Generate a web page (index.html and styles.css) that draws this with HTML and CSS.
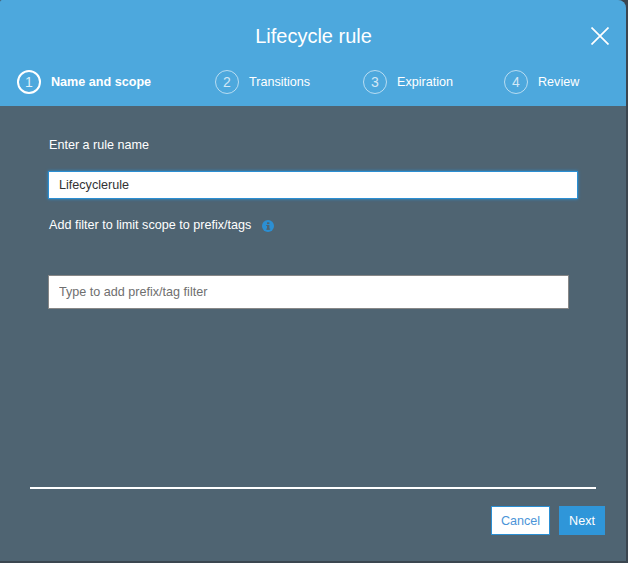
FILE: index.html
```html
<!DOCTYPE html>
<html lang="en">
<head>
<meta charset="utf-8">
<title>Lifecycle rule</title>
<link rel="stylesheet" href="styles.css">
</head>
<body>
<div class="dialog">
  <header class="header">
    <div class="title-row">
      <h1 class="title">Lifecycle rule</h1>
      <button class="close" aria-label="Close">
        <svg width="18" height="18" viewBox="0 0 18 18"><path d="M0.5 0.5L17.5 17.5M17.5 0.5L0.5 17.5" class="close-x"/></svg>
      </button>
    </div>
    <ol class="steps">
      <li class="step step-1 active"><span class="num">1</span><span>Name and scope</span></li>
      <li class="step step-2"><span class="num">2</span><span>Transitions</span></li>
      <li class="step step-3"><span class="num">3</span><span>Expiration</span></li>
      <li class="step step-4"><span class="num">4</span><span>Review</span></li>
    </ol>
  </header>
  <main class="body">
    <label class="label">Enter a rule name</label>
    <input class="input input-name" type="text" value="Lifecyclerule">
    <div class="label filter-label">Add filter to limit scope to prefix/tags
      <svg class="info" width="12" height="12" viewBox="0 0 12 12"><circle cx="6" cy="6" r="6" fill="#2b8fd3"/><rect x="5" y="5" width="2.4" height="4.6" fill="#4f6472"/><rect x="4.2" y="8.6" width="4" height="1.1" fill="#4f6472"/><rect x="4.2" y="5" width="2" height="1" fill="#4f6472"/><rect x="5" y="2.3" width="2.4" height="1.8" fill="#4f6472"/></svg>
    </div>
    <input class="input input-filter" type="text" placeholder="Type to add prefix/tag filter">
  </main>
  <footer class="footer">
    <div class="actions">
      <button class="btn btn-cancel">Cancel</button>
      <button class="btn btn-next">Next</button>
    </div>
  </footer>
</div>
</body>
</html>
```
FILE: styles.css
```css
* { box-sizing: border-box; }
html, body { margin: 0; padding: 0; height: 100%; background: #3b4650; overflow: hidden; }
body { font-family: "Liberation Sans", Arial, sans-serif; }
.dialog { width: 626px; height: 561px; background: #4f6472; display: flex; flex-direction: column; border-radius: 2px 8px 0 0; overflow: hidden; }
.header { height: 106px; background: #4da8dd; color: #fff; flex: none; }
.title-row { height: 70px; padding: 2px 0 0 1px; display: flex; align-items: center; justify-content: center; position: relative; }
.title { margin: 0; font-size: 20px; font-weight: 400; }
.close { position: absolute; left: 591px; top: 27px; width: 18px; height: 18px; padding: 0; border: 0; background: none; display: flex; }
.close-x { stroke: #fff; stroke-width: 1.7; fill: none; }
.steps { list-style: none; margin: 0; padding: 0 0 0 17px; display: flex; height: 24px; align-items: center; font-size: 12.6px; }
.step { display: flex; align-items: center; gap: 10px; color: #fff; line-height: 22px; }
.step-1 { width: 198px; }
.step-2 { width: 148px; }
.step-3 { width: 141px; }
.num { width: 24px; height: 24px; border-radius: 50%; border: 1.5px solid rgba(255,255,255,.6); display: flex; align-items: center; justify-content: center; font-size: 14px; color: rgba(255,255,255,.75); flex: none; }
.active .num { border: 2px solid #fff; color: #dff0fa; font-weight: 400; }
.active { font-weight: 700; }
.body { flex: 1; padding: 32px 48px 0; color: #fff; }
.label { display: block; font-size: 12.6px; line-height: 15px; padding-left: 1px; }
.input { display: block; padding: 0 10px 1px; font: 12.6px "Liberation Sans", Arial, sans-serif; color: #333; background: #fff; outline: none; border-radius: 0; }
.input-name { width: 530px; height: 28px; margin-top: 18px; border: 1px solid #2b8fd3; box-shadow: 0 0 3px #2b8fd3; }
.filter-label { margin-top: 19px; display: flex; align-items: center; gap: 11px; }
.info { flex: none; }
.input-filter { width: 521px; height: 34px; margin-top: 42px; border: 1px solid #878787; }
.input-filter::placeholder { color: #6f6f6f; opacity: 1; }
.footer { flex: none; height: 74px; margin: 0 30px; border-top: 2px solid #fff; padding-top: 17px; width: 566px; }
.actions { display: flex; justify-content: flex-end; gap: 9px; margin-right: -9px; }
.btn { height: 29px; font: 12.6px "Liberation Sans", Arial, sans-serif; border-radius: 0; padding: 0; }
.btn-cancel { width: 59px; background: #fff; color: #4b94d8; border: 1px solid #2b8fd3; }
.btn-next { width: 46px; background: #2f96d9; color: #fff; border: 0; }
```
